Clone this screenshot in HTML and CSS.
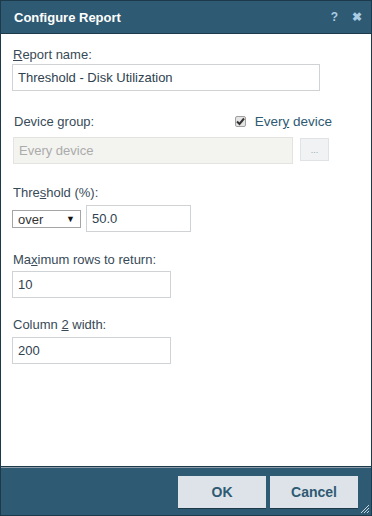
FILE: index.html
```html
<!DOCTYPE html>
<html>
<head>
<meta charset="utf-8">
<link rel="stylesheet" href="styles.css">
</head>
<body>
<div class="dialog">
  <div class="titlebar">
    <span class="title">Configure Report</span>
    <span class="tb-icons"><span class="help">?</span><span class="close">&#10006;</span></span>
  </div>
  <div class="content">
    <div class="field f-report">
      <label class="lbl"><u>R</u>eport name:</label>
      <div class="input wide">Threshold - Disk Utilization</div>
    </div>
    <div class="field f-group">
      <div class="group-head">
        <label class="lbl">Device group:</label>
        <span class="chk-wrap"><span class="chk"><svg width="9" height="9" viewBox="0 0 9 9"><path d="M1 4.5 L3.5 7 L8 1.5" fill="none" stroke="#333" stroke-width="2"/></svg></span><span class="chk-lbl">Ever<u>y</u> device</span></span>
      </div>
      <div class="group-row">
        <div class="input disabled">Every device</div>
        <div class="dots">...</div>
      </div>
    </div>
    <div class="field f-thr">
      <label class="lbl">Thre<u>s</u>hold (%):</label>
      <div class="thr-row">
        <div class="select"><span>over</span><span class="arrow">&#9660;</span></div>
        <div class="input mid">50.0</div>
      </div>
    </div>
    <div class="field f-max">
      <label class="lbl">Ma<u>x</u>imum rows to return:</label>
      <div class="input short">10</div>
    </div>
    <div class="field f-col">
      <label class="lbl">Column <u>2</u> width:</label>
      <div class="input short">200</div>
    </div>
  </div>
  <div class="footer">
    <button class="btn">OK</button>
    <button class="btn">Cancel</button>
    <svg class="grip" width="12" height="12" viewBox="0 0 12 12"><path d="M11 3 L3 11 M11 6 L6 11 M11 9 L9 11" stroke="#c9d6df" stroke-width="1"/></svg>
  </div>
</div>
</body>
</html>
```
FILE: styles.css
```css
html, body { margin: 0; padding: 0; }
body { font-family: "Liberation Sans", Arial, sans-serif; background: #fff; }
.dialog {
  width: 372px; height: 516px; box-sizing: border-box;
  border: 1px solid #1d3a4b;
  display: flex; flex-direction: column;
}
.titlebar {
  height: 32px; flex: none; background: #2e5a73;
  border-bottom: 1px solid #1d3a4b;
  display: flex; align-items: center; justify-content: space-between;
  padding: 0 9px 0 13px;
  color: #fff;
}
.title { font-weight: bold; font-size: 13px; }
.tb-icons { display: flex; align-items: center; gap: 14px; color: #a9cbe3; font-weight: bold; }
.help { font-size: 12px; }
.close { font-size: 12px; }
.content { flex: 1; padding: 0 0 0 11px; color: #33434f; font-size: 13px; }
.lbl { display: block; color: #384a57; font-size: 13px; line-height: 15px; padding-left: 1px; }
u { text-decoration: underline; }
.field { display: flex; flex-direction: column; }
.f-report { margin-top: 13px; gap: 2px; }
.f-group { margin-top: 23px; gap: 8px; padding-left: 1px; }
.f-thr { margin-top: 21px; gap: 5px; }
.f-max { margin-top: 20px; gap: 4px; }
.f-col { margin-top: 19px; gap: 5px; }
.input {
  box-sizing: border-box; height: 27px; border: 1px solid #cfd3d6;
  padding: 0 5px; display: flex; align-items: center;
  font-size: 13px; color: #2f4250; background: #fff;
}
.wide { width: 308px; }
.short { width: 159px; }
.mid { width: 105px; }
.group-head { display: flex; justify-content: space-between; align-items: center; padding-right: 39px; }
.chk-wrap { display: flex; align-items: center; gap: 9px; }
.chk {
  width: 11px; height: 11px; border: 1px solid #a0a0a0; border-radius: 2px; box-sizing: border-box;
  background: #e4e4e4; display: flex; align-items: center; justify-content: center;
}
.chk-lbl { color: #2e5a73; font-size: 13.5px; }
.group-row { display: flex; align-items: flex-start; gap: 7px; }
.input.disabled { width: 280px; background: #f3f3f0; border-color: #e3e3df; color: #ababab; }
.dots {
  width: 29px; height: 23px; margin-top: 1px; box-sizing: border-box; background: #f0f2f4; border: 1px solid #e0e3e6;
  font-size: 9px; color: #9aa; display: flex; align-items: flex-end; justify-content: center; padding-bottom: 5px;
}
.thr-row { display: flex; align-items: center; gap: 5px; }
.select {
  box-sizing: border-box; width: 69px; height: 18px; margin-top: 1px; border: 1px solid #a5a5a5;
  display: flex; align-items: center; justify-content: space-between; padding: 0 5px 0 5px;
  color: #333; font-size: 13px;
}
.arrow { font-size: 9px; color: #111; }
.footer {
  height: 46px; flex: none; background: #2e5a73;
  border-top: 1px solid #1d3a4b; box-shadow: inset 0 1px 0 #8d9ca6;
  display: flex; align-items: center; justify-content: flex-end; gap: 4px;
  padding: 2px 13px 0 0; position: relative;
}
.btn {
  width: 88px; height: 32px; border: none; background: #dde3e8;
  font-family: "Liberation Sans", Arial, sans-serif; font-weight: bold; font-size: 14px; color: #2e5a73;
  box-shadow: 0 1px 0 #1d3a4b;
}
.grip { position: absolute; right: 1px; bottom: 1px; }
```
